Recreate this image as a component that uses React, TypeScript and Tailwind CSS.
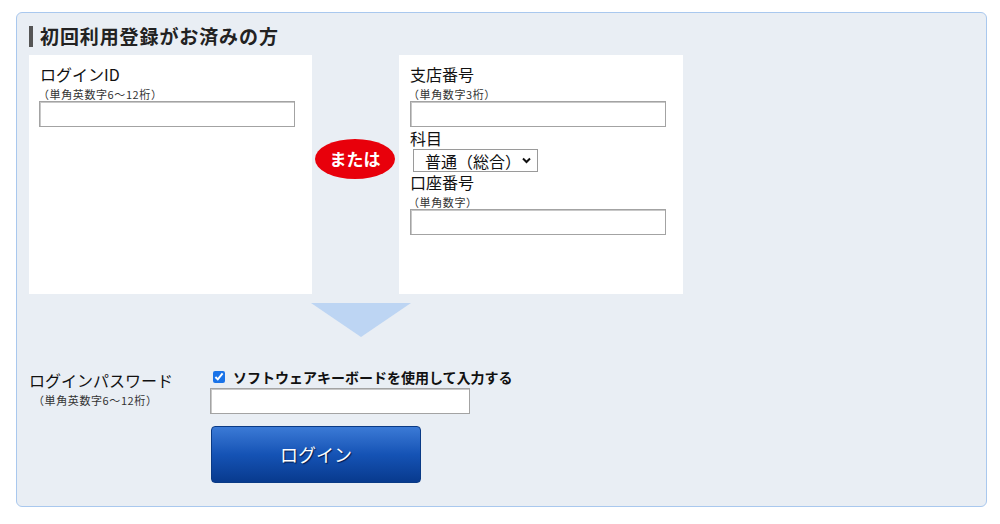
import { useState } from "react";

const font = { fontFamily: '"Noto Sans CJK JP", "Noto Sans", sans-serif' };

function TextInput({ className }: { className: string }) {
  return (
    <input
      type="text"
      className={`block h-[26px] bg-white border border-[#a3a3a3] shadow-[inset_1px_1px_0_#c8c8c8] outline-none px-1 text-[14px] ${className}`}
    />
  );
}

function Label({ text, note }: { text: string; note?: string }) {
  return (
    <div>
      <div className="text-[16px] leading-[18px] text-[#111]">{text}</div>
      {note && (
        <div className="text-[11px] leading-[14px] text-[#333] -ml-[2px] mt-[4px] tracking-[0.6px]">
          {note}
        </div>
      )}
    </div>
  );
}

export default function App() {
  const [soft, setSoft] = useState(true);

  return (
    <div className="w-[1000px] h-[524px] bg-white pt-[12px] pl-[16px]" style={font}>
      <div className="w-[971px] h-[495px] border border-[#a9c8ee] rounded-[6px] bg-[#e9eef4] px-[12px] pt-[12px]">
        {/* Title */}
        <div className="flex items-center h-[22px]">
          <div className="w-[4px] h-[21px] bg-[#555]" />
          <h1 className="ml-[7px] text-[19px] leading-[22px] font-bold text-[#222] tracking-[0.9px]">
            初回利用登録がお済みの方
          </h1>
        </div>

        {/* Panels */}
        <div className="flex mt-[8px] h-[239px]">
          <div className="w-[283px] bg-white pl-[11px] pt-[10px]">
            <Label text="ログインID" note="（単角英数字6〜12桁）" />
            <TextInput className="-ml-[1px] w-[256px]" />
          </div>

          <div className="w-[87px] pl-[3px] pt-[84px]">
            <div className="w-[80px] h-[40px] rounded-[50%] bg-[#e8000b] flex items-center justify-center text-white text-[17px] font-bold">
              または
            </div>
          </div>

          <div className="w-[284px] bg-white pl-[11px] pt-[10px]">
            <Label text="支店番号" note="（単角数字3桁）" />
            <TextInput className="w-[256px]" />
            <div className="text-[16px] leading-[18px] text-[#111] mt-[2px]">科目</div>
            <div className="relative mt-[2px] ml-[3px] w-[125px] h-[23px] border border-[#9a9a9a] bg-white flex items-center">
              <span className="pl-[11px] text-[16px] leading-[18px] text-[#111]">普通（総合）</span>
              <svg className="absolute right-[6px] top-[7px]" width="9" height="7" viewBox="0 0 9 7">
                <path d="M1 1.5 L4.5 5 L8 1.5" fill="none" stroke="#111" strokeWidth="2" />
              </svg>
            </div>
            <div className="mt-[1px]">
              <Label text="口座番号" note="（単角数字）" />
            </div>
            <TextInput className="w-[256px]" />
          </div>
        </div>

        {/* Arrow */}
        <div className="mt-[9px] ml-[282px]">
          <svg width="100" height="34" viewBox="0 0 100 34">
            <polygon points="0,0 100,0 50,34" fill="#bdd5f3" />
          </svg>
        </div>

        {/* Password */}
        <div className="flex mt-[30px]">
          <div className="w-[181px] pt-[4px]">
            <div className="text-[16px] leading-[18px] text-[#111]">ログインパスワード</div>
            <div className="text-[11px] leading-[14px] text-[#333] ml-[4px] mt-[4px] tracking-[0.6px]">
              （単角英数字6〜12桁）
            </div>
          </div>
          <div>
            <label className="flex items-center ml-[3px] h-[20px]">
              <input
                type="checkbox"
                checked={soft}
                onChange={(e) => setSoft(e.target.checked)}
                className="w-[12px] h-[12px] accent-[#1a73e8] m-0"
              />
              <span className="ml-[8px] text-[14px] font-bold text-[#111]">
                ソフトウェアキーボードを使用して入力する
              </span>
            </label>
            <TextInput className="mt-[1px] w-[260px] h-[25px]" />
            <button
              type="button"
              className="mt-[12px] ml-[1px] w-[210px] h-[57px] rounded-[4px] bg-gradient-to-b from-[#3b7ad6] via-[#1553b5] to-[#083a8e] text-white text-[18px] [text-shadow:1px_1px_1px_#001a4d] border border-[#0a3a85]"
            >
              ログイン
            </button>
          </div>
        </div>
      </div>
    </div>
  );
}
